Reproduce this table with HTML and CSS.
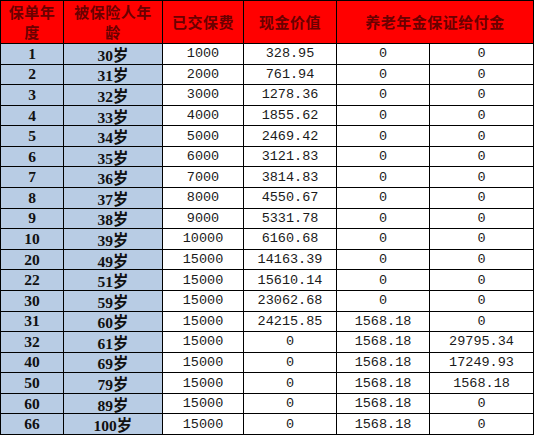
FILE: index.html
```html
<!DOCTYPE html>
<html lang="zh">
<head>
<meta charset="utf-8">
<link rel="stylesheet" href="styles.css">
</head>
<body>
<div class="sheet">
  <div class="h">保单年<br>度</div>
  <div class="h">被保险人年<br>龄</div>
  <div class="h">已交保费</div>
  <div class="h">现金价值</div>
  <div class="h span2">养老年金保证给付金</div>

  <div class="k">1</div><div class="k">30岁</div><div class="v">1000</div><div class="v">328.95</div><div class="v">0</div><div class="v">0</div>
  <div class="k">2</div><div class="k">31岁</div><div class="v">2000</div><div class="v">761.94</div><div class="v">0</div><div class="v">0</div>
  <div class="k">3</div><div class="k">32岁</div><div class="v">3000</div><div class="v">1278.36</div><div class="v">0</div><div class="v">0</div>
  <div class="k">4</div><div class="k">33岁</div><div class="v">4000</div><div class="v">1855.62</div><div class="v">0</div><div class="v">0</div>
  <div class="k">5</div><div class="k">34岁</div><div class="v">5000</div><div class="v">2469.42</div><div class="v">0</div><div class="v">0</div>
  <div class="k">6</div><div class="k">35岁</div><div class="v">6000</div><div class="v">3121.83</div><div class="v">0</div><div class="v">0</div>
  <div class="k">7</div><div class="k">36岁</div><div class="v">7000</div><div class="v">3814.83</div><div class="v">0</div><div class="v">0</div>
  <div class="k">8</div><div class="k">37岁</div><div class="v">8000</div><div class="v">4550.67</div><div class="v">0</div><div class="v">0</div>
  <div class="k">9</div><div class="k">38岁</div><div class="v">9000</div><div class="v">5331.78</div><div class="v">0</div><div class="v">0</div>
  <div class="k">10</div><div class="k">39岁</div><div class="v">10000</div><div class="v">6160.68</div><div class="v">0</div><div class="v">0</div>
  <div class="k">20</div><div class="k">49岁</div><div class="v">15000</div><div class="v">14163.39</div><div class="v">0</div><div class="v">0</div>
  <div class="k">22</div><div class="k">51岁</div><div class="v">15000</div><div class="v">15610.14</div><div class="v">0</div><div class="v">0</div>
  <div class="k">30</div><div class="k">59岁</div><div class="v">15000</div><div class="v">23062.68</div><div class="v">0</div><div class="v">0</div>
  <div class="k">31</div><div class="k">60岁</div><div class="v">15000</div><div class="v">24215.85</div><div class="v">1568.18</div><div class="v">0</div>
  <div class="k">32</div><div class="k">61岁</div><div class="v">15000</div><div class="v">0</div><div class="v">1568.18</div><div class="v">29795.34</div>
  <div class="k">40</div><div class="k">69岁</div><div class="v">15000</div><div class="v">0</div><div class="v">1568.18</div><div class="v">17249.93</div>
  <div class="k">50</div><div class="k">79岁</div><div class="v">15000</div><div class="v">0</div><div class="v">1568.18</div><div class="v">1568.18</div>
  <div class="k">60</div><div class="k">89岁</div><div class="v">15000</div><div class="v">0</div><div class="v">1568.18</div><div class="v">0</div>
  <div class="k">66</div><div class="k">100岁</div><div class="v">15000</div><div class="v">0</div><div class="v">1568.18</div><div class="v">0</div>
</div>
</body>
</html>
```

FILE: styles.css
```css
html, body {
  margin: 0;
  padding: 0;
  background: #ffffff;
}

.sheet {
  display: grid;
  grid-template-columns: 62px 98px 80px 92px 92px 103px;
  grid-template-rows: 42px repeat(19, 1fr);
  gap: 1px;
  padding: 1px;
  width: 534px;
  height: 435px;
  box-sizing: border-box;
  background: #000000;
}

.sheet > div {
  display: flex;
  align-items: center;
  justify-content: center;
  text-align: center;
  overflow: hidden;
}

.h {
  background: #ff0000;
  color: #6a0000;
  font-family: "Noto Sans CJK SC", sans-serif;
  font-weight: 700;
  font-size: 15px;
  line-height: 20px;
  letter-spacing: 0.5px;
}

.span2 {
  grid-column: span 2;
}

.k {
  background: #b8cce4;
  color: #111111;
  font-family: "Liberation Serif", "Noto Sans CJK SC", serif;
  font-weight: 700;
  font-size: 15.5px;
}

.v {
  background: #ffffff;
  color: #1a1a1a;
  font-family: "Liberation Mono", monospace;
  font-size: 13.5px;
}
```
